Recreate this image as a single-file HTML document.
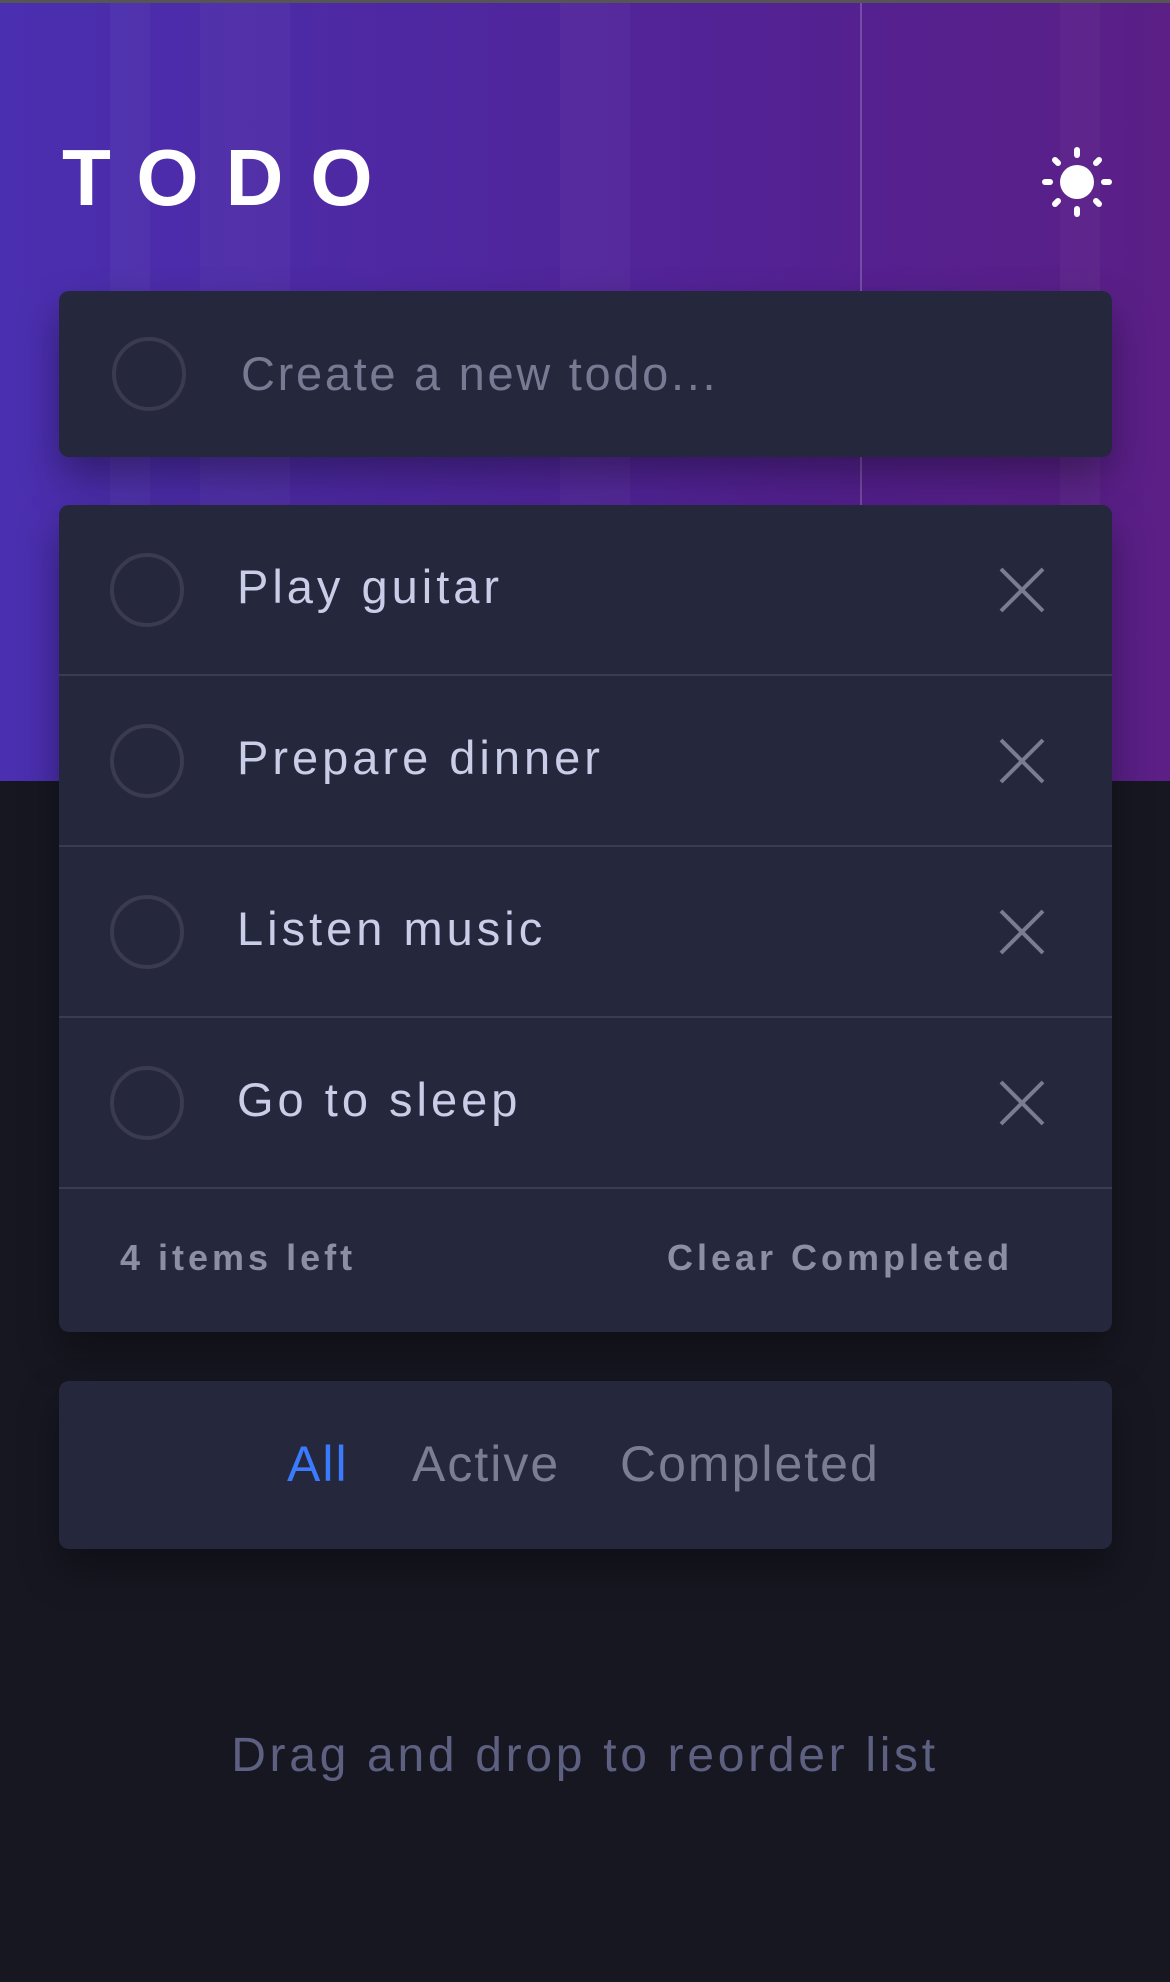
<!DOCTYPE html>
<html><head><meta charset="utf-8"><style>
*{margin:0;padding:0;box-sizing:border-box}
body{width:1170px;height:1982px;background:#171722;font-family:"Liberation Sans",sans-serif;position:relative;overflow:hidden}
.hdr{position:absolute;left:0;top:0;width:1170px;height:781px;background:linear-gradient(90deg,#4a2fb0 0%,#4f279f 40%,#55208f 75%,#5b1f86 100%);border-top:3px solid #555}
.hdr .s{position:absolute;top:0;height:781px;background:rgba(255,255,255,.03)}
.title{position:absolute;left:62px;top:138px;color:#fff;font-size:80px;font-weight:bold;letter-spacing:27px;line-height:1}
.card{position:absolute;left:59px;width:1053px;background:#25273c;border-radius:10px;box-shadow:0 20px 40px rgba(0,0,0,.35)}
.circ{position:absolute;width:74px;height:74px;border:4px solid #3a3b4e;border-radius:50%}
.t{position:absolute;font-size:47px;color:#cacde8;line-height:1;letter-spacing:4px}
.row{position:absolute;left:0;width:1053px;height:171px;border-bottom:2px solid #3a3c52}
.x{position:absolute;left:940px;top:62px}
.ft{position:absolute;font-size:36px;font-weight:bold;color:#8c8ea3;line-height:1;letter-spacing:4px}
.f{position:absolute;font-size:50px;color:#7b7d94;line-height:1;top:58px;letter-spacing:2px}
</style></head><body>
<div class="hdr">
<div class="s" style="left:110px;width:40px"></div>
<div class="s" style="left:200px;width:90px"></div>
<div class="s" style="left:560px;width:70px"></div>
<div class="s" style="left:860px;width:2px;background:rgba(255,255,255,.2)"></div>
<div class="s" style="left:1060px;width:40px"></div>
</div>
<div class="title">TODO</div>
<svg style="position:absolute;left:1037px;top:142px" width="80" height="80" viewBox="-40 -40 80 80">
<circle r="17" fill="#fff"/>
<g stroke="#fff" stroke-width="6" stroke-linecap="round">
<line x1="0" y1="-27" x2="0" y2="-32"/><line x1="0" y1="27" x2="0" y2="32"/>
<line x1="-27" y1="0" x2="-32" y2="0"/><line x1="27" y1="0" x2="32" y2="0"/>
<line x1="-19" y1="-19" x2="-22" y2="-22"/><line x1="19" y1="-19" x2="22" y2="-22"/>
<line x1="-19" y1="19" x2="-22" y2="22"/><line x1="19" y1="19" x2="22" y2="22"/>
</g></svg>

<div class="card" style="top:291px;height:166px">
<div class="circ" style="left:53px;top:46px"></div>
<div class="t" style="left:182px;top:59px;color:#777a92;letter-spacing:2.7px">Create a new todo...</div>
</div>

<div class="card" style="top:505px;height:827px">
<div class="row" style="top:0"><div class="circ" style="left:51px;top:48px"></div><div class="t" style="left:178px;top:58px">Play guitar</div>
<svg class="x" width="46" height="46"><path d="M2 2L44 44M44 2L2 44" stroke="#7a7c92" stroke-width="4"/></svg></div>
<div class="row" style="top:171px"><div class="circ" style="left:51px;top:48px"></div><div class="t" style="left:178px;top:58px">Prepare dinner</div>
<svg class="x" width="46" height="46"><path d="M2 2L44 44M44 2L2 44" stroke="#7a7c92" stroke-width="4"/></svg></div>
<div class="row" style="top:342px"><div class="circ" style="left:51px;top:48px"></div><div class="t" style="left:178px;top:58px">Listen music</div>
<svg class="x" width="46" height="46"><path d="M2 2L44 44M44 2L2 44" stroke="#7a7c92" stroke-width="4"/></svg></div>
<div class="row" style="top:513px"><div class="circ" style="left:51px;top:48px"></div><div class="t" style="left:178px;top:58px">Go to sleep</div>
<svg class="x" width="46" height="46"><path d="M2 2L44 44M44 2L2 44" stroke="#7a7c92" stroke-width="4"/></svg></div>
<div class="ft" style="left:61px;top:735px">4 items left</div>
<div class="ft" style="left:608px;top:735px">Clear Completed</div>
</div>

<div class="card" style="top:1381px;height:168px">
<div class="f" style="left:228px;color:#3a7bfd">All</div>
<div class="f" style="left:353px">Active</div>
<div class="f" style="left:561px">Completed</div>
</div>

<div style="position:absolute;left:0;width:1170px;top:1728px;text-align:center;font-size:48px;color:#5d6080;letter-spacing:3.7px">Drag and drop to reorder list</div>
</body></html>
